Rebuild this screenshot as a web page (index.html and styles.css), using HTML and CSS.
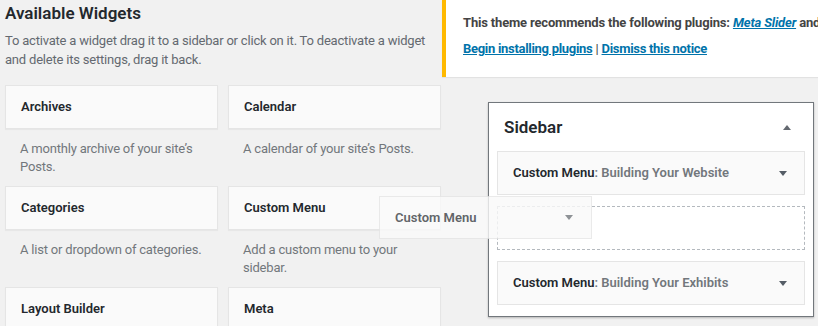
FILE: index.html
```html
<!DOCTYPE html>
<html lang="en">
<head>
  <meta charset="UTF-8">
  <meta name="viewport" content="width=device-width, initial-scale=1.0">
  <title>Widgets</title>
<link rel="stylesheet" href="styles.css">
</head>
<body>

  <div class="tela">

    <div class="disponiveis">
      <h2 class="titulo-painel">Available Widgets</h2>
      <p class="descricao-painel">To activate a widget drag it to a sidebar or click on it. To deactivate a widget and delete its settings, drag it back.</p>

      <div class="lista-widgets">
        <div class="widget">
          <div class="widget-topo"><h3>Archives</h3></div>
          <div class="widget-descricao">A monthly archive of your site’s Posts.</div>
        </div>
        <div class="widget">
          <div class="widget-topo"><h3>Calendar</h3></div>
          <div class="widget-descricao">A calendar of your site’s Posts.</div>
        </div>
        <div class="widget">
          <div class="widget-topo"><h3>Categories</h3></div>
          <div class="widget-descricao">A list or dropdown of categories.</div>
        </div>
        <div class="widget">
          <div class="widget-topo"><h3>Custom Menu</h3></div>
          <div class="widget-descricao">Add a custom menu to your sidebar.</div>
        </div>
        <div class="widget">
          <div class="widget-topo"><h3>Layout Builder</h3></div>
          <div class="widget-descricao">A widget that builds a layout from other widgets.</div>
        </div>
        <div class="widget">
          <div class="widget-topo"><h3>Meta</h3></div>
          <div class="widget-descricao">Login, RSS, &amp; WordPress.org links.</div>
        </div>
      </div>
    </div>

    <div class="lado">
      <div class="aviso">
        <p><strong>This theme recommends the following plugins: <a href="#"><em>Meta Slider</em></a> and <a href="#"><em>Page Builder</em></a>.</strong></p>
        <p><strong><a href="#">Begin installing plugins</a></strong> | <strong><a href="#">Dismiss this notice</a></strong></p>
      </div>

      <div class="sidebar">
        <div class="sidebar-cabecalho">
          <h2>Sidebar</h2>
          <span class="seta cima"></span>
        </div>
        <div class="sidebar-widget">
          <h3>Custom Menu<span class="no-titulo">: Building Your Website</span></h3>
          <span class="seta"></span>
        </div>
        <div class="lugar-vazio"></div>
        <div class="sidebar-widget">
          <h3>Custom Menu<span class="no-titulo">: Building Your Exhibits</span></h3>
          <span class="seta"></span>
        </div>
      </div>
    </div>

    <!-- widget sendo arrastado -->
    <div class="arrastando">
      <h3>Custom Menu</h3>
      <span class="seta"></span>
    </div>

  </div>

</body>
</html>
```

FILE: styles.css
```css
html, body {
  height: 326px;
  overflow: hidden;
}

body {
  font-family: Roboto, "Noto Sans", sans-serif;
  font-size: 13px;
  background-color: #f1f1f1;
  color: #23282d;
  margin: 0;
}

h2, h3, p {
  margin: 0;
}

.tela {
  position: relative;
  display: flex;
}

.disponiveis {
  width: 436px;
  flex-shrink: 0;
  padding-left: 5px;
}

.titulo-painel {
  font-size: 17px;
  font-weight: 600;
  line-height: 23px;
  padding-top: 2px;
}

.descricao-painel {
  margin-top: 6px;
  line-height: 19px;
  color: #646970;
  letter-spacing: -0.2px;
}

.lista-widgets {
  margin-top: 16px;
  display: grid;
  grid-template-columns: 213px 213px;
  column-gap: 10px;
}

.widget {
  margin-bottom: 10px;
}

.widget-topo {
  background-color: #fafafa;
  border: 1px solid #e5e5e5;
  box-shadow: 0 1px 1px rgba(0, 0, 0, 0.04);
}

.widget-topo h3,
.sidebar-widget h3,
.arrastando h3 {
  font-size: 13px;
  font-weight: 600;
  line-height: 42px;
  padding: 0 15px;
}

.widget-descricao {
  padding: 11px 15px 0;
  line-height: 17.5px;
  min-height: 36px;
  color: #72777c;
  letter-spacing: -0.2px;
}

/* Coluna da direita */
.lado {
  flex: 1;
  min-width: 0;
  margin-left: 1px;
}

.aviso {
  background-color: #fff;
  border-left: 4px solid #ffb900;
  box-shadow: 0 1px 1px rgba(0, 0, 0, 0.06);
  padding: 13px 0 19px 17px;
  white-space: nowrap;
  overflow: hidden;
  color: #444;
  line-height: 19px;
  letter-spacing: -0.17px;
}

.aviso p + p {
  margin-top: 7px;
}

.aviso p + p strong {
  letter-spacing: -0.3px;
}

.aviso a {
  color: #0073aa;
  text-decoration: underline;
}

.sidebar {
  width: 308px;
  margin: 25px 0 0 46px;
  background-color: #fff;
  border: 1px solid #72777c;
  box-shadow: 0 1px 2px rgba(0, 0, 0, 0.25);
  padding: 0 8px 11px;
}

.sidebar-cabecalho {
  display: flex;
  align-items: center;
  justify-content: space-between;
  padding: 13px 14px 13px 7px;
}

.sidebar-cabecalho h2 {
  font-size: 17px;
  font-weight: 600;
  line-height: 22px;
}

.sidebar-widget {
  display: flex;
  align-items: center;
  justify-content: space-between;
  background-color: #fafafa;
  border: 1px solid #e5e5e5;
  padding-right: 17px;
}

.no-titulo {
  color: #72777c;
}

.lugar-vazio {
  height: 42px;
  border: 1px dashed #b4b9be;
  margin: 11px 0;
}

/* setinhas */
.seta {
  width: 0;
  height: 0;
  border-left: 4px solid transparent;
  border-right: 4px solid transparent;
  border-top: 5px solid #555d66;
}

.seta.cima {
  border-top: none;
  border-bottom: 5px solid #646970;
}

.arrastando {
  position: absolute;
  left: 379px;
  top: 196px;
  width: 213px;
  box-sizing: border-box;
  display: flex;
  align-items: center;
  justify-content: space-between;
  background-color: #fafafa;
  border: 1px solid #e5e5e5;
  padding-right: 18px;
  opacity: 0.8;
  color: #3c4146;
}

.arrastando h3 {
  line-height: 41px;
}

.arrastando .seta {
  border-top-color: #72777c;
}
```
